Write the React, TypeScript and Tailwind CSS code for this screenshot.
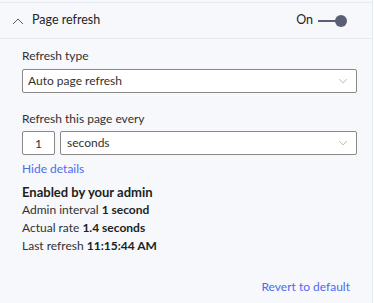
import React, { useState } from 'react'

const FONT = { fontFamily: '"Segoe UI", Lato, sans-serif' }

const Chevron = ({ up = false, className = '' }: { up?: boolean; className?: string }) => (
  <svg viewBox="0 0 12 8" className={className} fill="none" stroke="currentColor" strokeWidth="1">
    {up ? <path d="M1 7 L6 2 L11 7" /> : <path d="M1 1.5 L6 6.5 L11 1.5" />}
  </svg>
)

export default function App() {
  const [on] = useState(true)
  const [count, setCount] = useState('1')

  return (
    <div className="w-[374px] h-[303px] bg-white text-[#252423]" style={FONT}>
      <div className="h-full w-[373px] bg-[#f6f8fc] border-r border-[#e6eaf2] pt-[2px]">
        {/* header */}
        <div className="h-[37px] border-y border-[#e6eaf2] flex items-center pl-[12px] pr-[25px]">
          <Chevron up className="w-[12px] h-[8px] text-[#605e5c]" />
          <span className="ml-[8px] text-[12.5px] text-[#252423]">Page refresh</span>
          <div className="ml-auto flex items-center">
            <span className="text-[12.5px] text-[#252423]">On</span>
            <div className="ml-[5px] relative w-[29px] h-[12px] flex items-center">
              <div className="h-[2px] w-[20px] bg-[#5b5f75]" />
              {on && <div className="absolute right-0 top-0 w-[12px] h-[12px] rounded-full bg-[#5b5f75]" />}
            </div>
          </div>
        </div>

        {/* body */}
        <div className="pl-[22px] pr-[15px] pt-[8px] text-[12px] text-[#323130]">
          <div className="leading-[18px]">Refresh type</div>
          <div className="mt-[4px] h-[24px] border border-[#8a8886] rounded-[2px] bg-white flex items-center pl-[5px] pr-[8px]">
            <span>Auto page refresh</span>
            <Chevron className="ml-auto w-[10px] h-[6px] text-[#a19f9d]" />
          </div>

          <div className="mt-[17px] leading-[18px]">Refresh this page every</div>
          <div className="mt-[3px] flex gap-[5px]">
            <input
              value={count}
              onChange={(e) => setCount(e.target.value)}
              className="w-[33px] h-[24px] border border-[#8a8886] rounded-[2px] bg-white text-center outline-none"
            />
            <div className="flex-1 h-[24px] border border-[#8a8886] rounded-[2px] bg-white flex items-center pl-[6px] pr-[8px]">
              <span>seconds</span>
              <Chevron className="ml-auto w-[10px] h-[6px] text-[#a19f9d]" />
            </div>
          </div>

          <div className="mt-[5px] text-[#4f6bed] leading-[18px]">Hide details</div>

          <div className="mt-[5px] leading-[18px]">
            <div className="font-bold text-[13px] text-[#201f1e]">Enabled by your admin</div>
            <div>Admin interval <span className="font-bold text-[#201f1e]">1 second</span></div>
            <div>Actual rate <span className="font-bold text-[#201f1e]">1.4 seconds</span></div>
            <div>Last refresh <span className="font-bold text-[#201f1e]">11:15:44 AM</span></div>
          </div>

          <div className="mt-[23px] flex justify-end pr-[7px]">
            <span className="text-[#4f6bed]">Revert to default</span>
          </div>
        </div>
      </div>
    </div>
  )
}
